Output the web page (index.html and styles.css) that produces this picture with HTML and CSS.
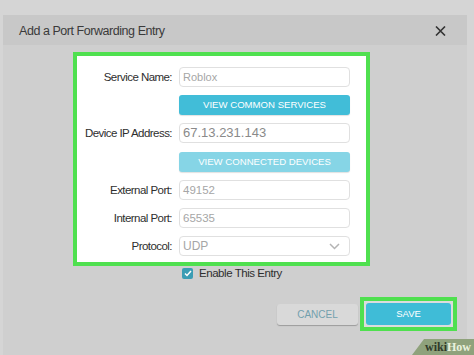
FILE: index.html
```html
<!DOCTYPE html>
<html lang="en">
    <head>
        <meta charset="utf-8">
        <link rel="stylesheet" href="styles.css">
    </head>
    <body>
        <div class="dialog">
            <div class="head">
                <span class="title">Add a Port Forwarding Entry</span>
                <svg class="close" width="11" height="10" viewBox="0 0 11 10">
                    <path d="M1 0.5 L10 9.5 M10 0.5 L1 9.5" stroke="#333" stroke-width="1.6" fill="none"/>
                </svg>
            </div>
            <div class="content">
                <div class="frame">
                    <div class="form">
                        <label>Service Name:</label>
                        <div class="field small">Roblox</div>
                        <div class="btn">VIEW COMMON SERVICES</div>
                        <label>Device IP Address:</label>
                        <div class="field big">67.13.231.143</div>
                        <div class="btn light">VIEW CONNECTED DEVICES</div>
                        <label>External Port:</label>
                        <div class="field">49152</div>
                        <label>Internal Port:</label>
                        <div class="field">65535</div>
                        <label>Protocol:</label>
                        <div class="field select">
                            <span>UDP</span>
                            <svg width="11" height="7" viewBox="0 0 11 7">
                                <path d="M1 1 L5.5 5.5 L10 1" stroke="#b4b4b4" stroke-width="1.5" fill="none"/>
                            </svg>
                        </div>
                    </div>
                </div>
                <div class="enable">
                    <span class="check">
                        <svg width="8" height="7" viewBox="0 0 8 7">
                            <path d="M1 3.5 L3 5.5 L7 1" stroke="#fff" stroke-width="1.5" fill="none"/>
                        </svg>
                    </span>
                    <span>Enable This Entry</span>
                </div>
                <div class="actions">
                    <div class="cancel">CANCEL</div>
                    <div class="save-frame">
                        <div class="save">SAVE</div>
                    </div>
                </div>
            </div>
        </div>
        <div class="badge"><b class="wiki">wiki</b><b class="how">How</b></div>
    </body>
</html>
```

FILE: styles.css
```css
* {
    margin: 0;
    padding: 0;
    box-sizing: border-box;
}
body {
    width: 474px;
    height: 355px;
    overflow: hidden;
    background-color: #d5d5d5;
    font-family: "Liberation Sans", Arial, sans-serif;
    color: #333;
    position: relative;
}
.dialog {
    margin: 15px 7px 0 3px;
    background-color: #cfcfcf;
    height: 340px;
}
.head {
    height: 30px;
    background-color: #c8c8c8;
    display: flex;
    align-items: center;
    justify-content: space-between;
    padding: 1px 21px 0 16px;
}
.title {
    font-size: 12.5px;
    letter-spacing: -0.45px;
    color: #3a3a3a;
}
.close {
    display: block;
}
.content {
    padding-top: 7px;
}
.frame {
    margin-left: 70px;
    width: 297px;
    height: 214px;
    border: 4px solid #4fe04f;
    background-color: #fff;
}
.form {
    display: grid;
    grid-template-columns: 95px 171px;
    grid-auto-rows: 20px;
    column-gap: 7px;
    row-gap: 8.2px;
    padding-top: 11px;
}
.form label {
    grid-column: 1;
    text-align: right;
    font-size: 11.5px;
    letter-spacing: -0.55px;
    line-height: 20px;
    color: #2e2e2e;
}
.field {
    grid-column: 2;
    border: 1px solid #e0e0e0;
    border-radius: 4px;
    padding-left: 3px;
    font-size: 11.5px;
    line-height: 18px;
    color: #a6a6a6;
}
.field.small {
    font-size: 11px;
}
.field.big {
    font-size: 13px;
    color: #8a8a8a;
}
.select {
    display: flex;
    align-items: center;
    justify-content: space-between;
    padding-right: 9px;
    font-size: 12px;
}
.btn {
    grid-column: 2;
    background-color: #41bdd8;
    border-radius: 3px;
    color: #fff;
    font-size: 9.6px;
    text-align: center;
    line-height: 20px;
    box-shadow: 0 1px 1px rgba(0, 0, 0, 0.12);
}
.btn.light {
    background-color: #86d5e6;
    line-height: 19px;
}
.enable {
    display: flex;
    align-items: center;
    gap: 6px;
    margin-left: 179px;
    margin-top: 1px;
    font-size: 11.5px;
    letter-spacing: -0.45px;
    color: #2e2e2e;
}
.check {
    width: 11px;
    height: 11px;
    border-radius: 2px;
    background-color: #3a9db4;
    display: flex;
    align-items: center;
    justify-content: center;
}
.actions {
    display: flex;
    justify-content: flex-end;
    align-items: center;
    gap: 2px;
    margin-right: 10px;
    margin-top: 18px;
}
.cancel {
    width: 81px;
    height: 21px;
    border-radius: 3px;
    background-color: #d9d9d9;
    box-shadow: 0 1px 1px rgba(0, 0, 0, 0.25);
    color: #72a0ad;
    font-size: 10px;
    line-height: 21px;
    text-align: center;
    margin-top: 1px;
}
.save-frame {
    width: 97px;
    height: 34px;
    border: 4px solid #4fe04f;
    padding: 2px;
    background-color: #dcdcdc;
}
.save {
    height: 100%;
    border-radius: 3px;
    background-color: #3fbcd7;
    color: #fff;
    font-size: 9.5px;
    line-height: 22px;
    text-align: center;
}
.badge {
    position: absolute;
    right: 0;
    bottom: 0;
    width: 62px;
    height: 16px;
    background-color: #8fa27c;
    clip-path: polygon(12px 0, 100% 0, 100% 100%, 0 100%);
    padding-left: 13px;
    font-family: "Liberation Serif", "Times New Roman", serif;
    font-size: 12px;
    line-height: 16px;
}
.wiki {
    color: #2f3a2a;
}
.how {
    color: #e9f1dd;
}
```
